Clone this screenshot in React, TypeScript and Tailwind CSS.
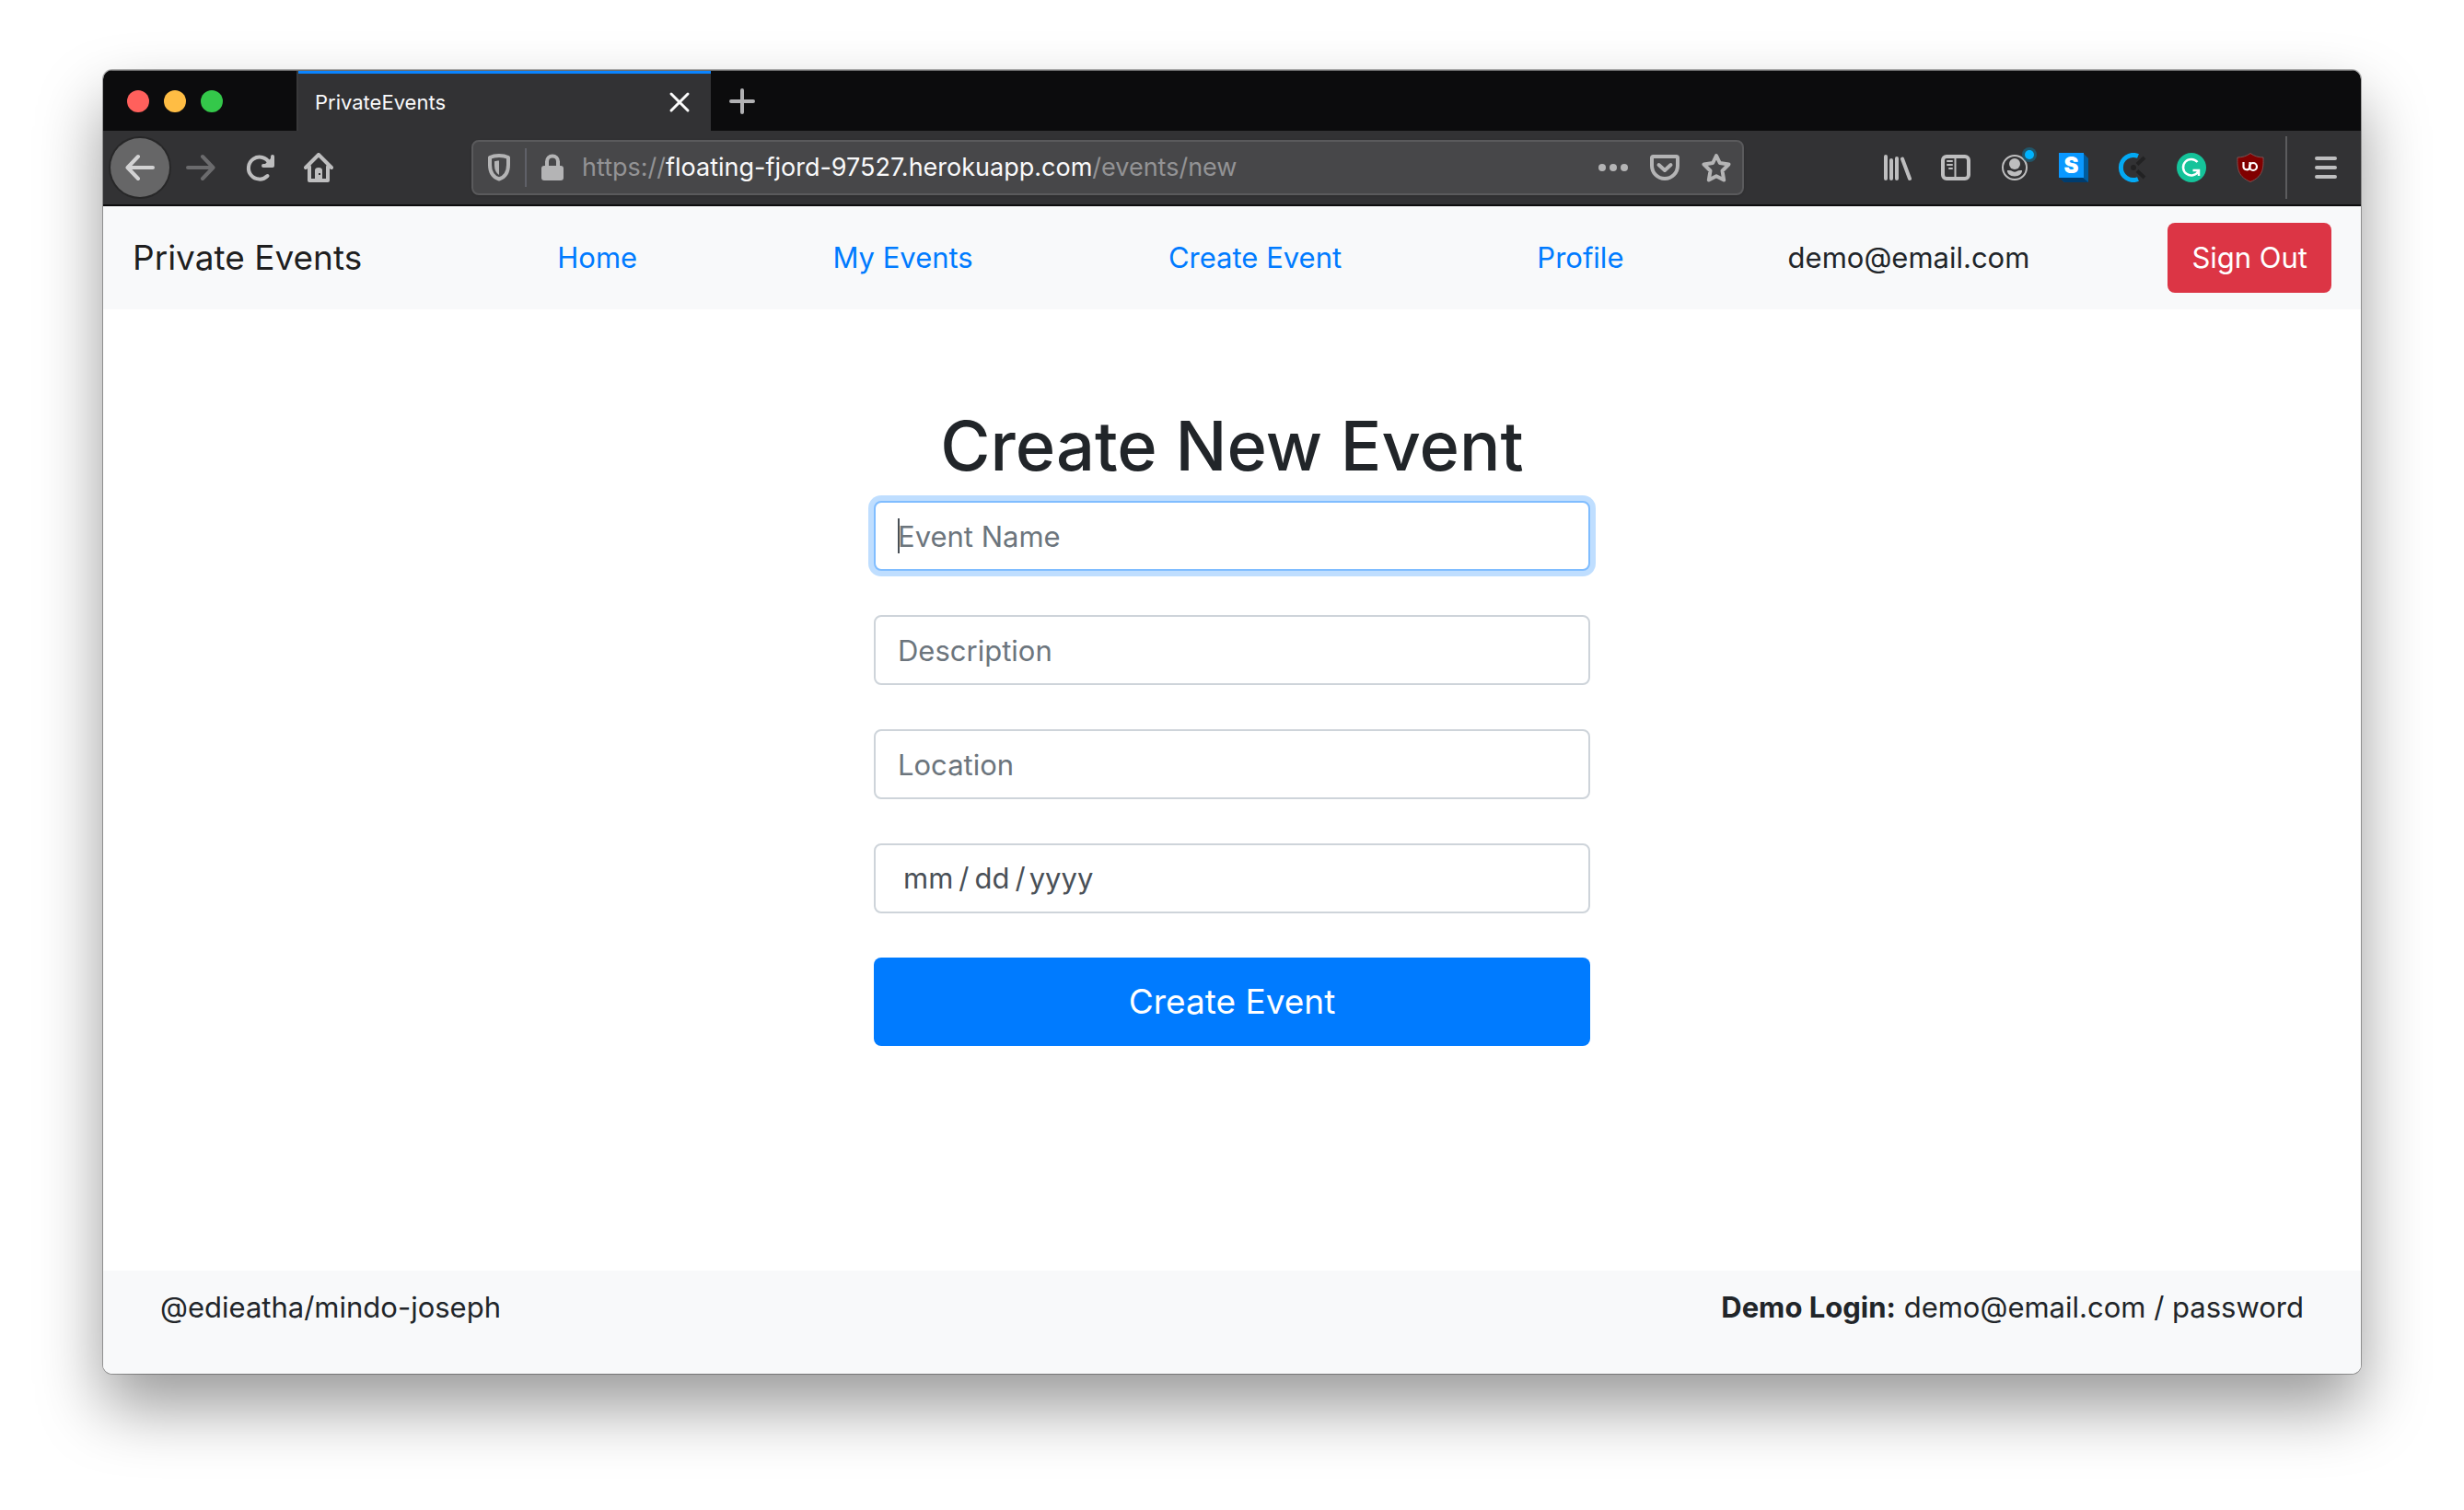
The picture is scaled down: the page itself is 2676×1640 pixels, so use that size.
import React from "react";

function Icon({ children, className = "size-8" }: { children: React.ReactNode; className?: string }) {
  return (
    <svg viewBox="0 0 32 32" className={className} fill="none" aria-hidden="true">
      {children}
    </svg>
  );
}

function ToolButton({ label, children }: { label: string; children: React.ReactNode }) {
  return (
    <button type="button" aria-label={label} className="flex size-16 shrink-0 items-center justify-center text-[#bebebf]">
      {children}
    </button>
  );
}

const line = { stroke: "currentColor", strokeWidth: 4, strokeLinecap: "round", strokeLinejoin: "round" } as const;

function TabStrip() {
  return (
    <div className="flex h-[66px] items-stretch border-t border-[#6e6e6e] bg-[#0c0c0d]">
      <div className="flex w-[212px] shrink-0 items-center gap-4 border-r-2 border-[#39393a] pl-[26px]">
        <button type="button" aria-label="Close window" className="size-6 rounded-full bg-[#ff605c]" />
        <button type="button" aria-label="Minimize window" className="size-6 rounded-full bg-[#ffbd44]" />
        <button type="button" aria-label="Zoom window" className="size-6 rounded-full bg-[#34c84a]" />
      </div>
      <div className="flex w-[448px] shrink-0 items-center justify-between border-t-3 border-[#0a84ff] bg-[#323234] pr-[18px] pl-[18px] text-[22px] text-[#f9f9fa]">
        <span>PrivateEvents</span>
        <button type="button" aria-label="Close tab">
          <Icon>
            <path d="M7 7 L25 25 M25 7 L7 25" stroke="#fbfbfb" strokeWidth="3" strokeLinecap="round" />
          </Icon>
        </button>
      </div>
      <button type="button" aria-label="New tab" className="ml-[18px] text-[#b1b1b3]">
        <Icon>
          <path d="M16 4 V28 M4 16 H28" {...line} />
        </Icon>
      </button>
    </div>
  );
}

function AddressBar() {
  return (
    <div className="mx-[134px] flex h-[60px] min-w-0 flex-1 items-center rounded-lg border-2 border-[#5a5a5c] bg-[#474749] pr-3 pl-3 text-[#b4b4b5] shadow-sm">
      <button type="button" aria-label="Tracking protection">
        <Icon>
          <path d="M16 4 C12 4 8.500 4.800 6 6 V14 C6 22 10 27.500 16 29.500 C22 27.500 26 22 26 14 V6 C23.500 4.800 20 4 16 4 Z" stroke="currentColor" strokeWidth="4" strokeLinejoin="round" transform="translate(0 -1)" />
          <path d="M16 8.500 C14 8.500 12.500 8.800 11 9.300 V14 C11 18.500 13 22 16 24 Z" fill="currentColor" />
        </Icon>
      </button>
      <span className="ml-3 h-[42px] w-0.5 bg-[#5f6068]" />
      <button type="button" aria-label="Site information" className="ml-3">
        <Icon>
          <path d="M10 15 V9.500 A6 6 0 0 1 22 9.500 V15" stroke="currentColor" strokeWidth="4" />
          <rect x="4" y="14" width="24" height="16" rx="3" fill="currentColor" />
        </Icon>
      </button>
      <span className="ml-4 flex-1 truncate text-[27px] text-[#939395]">
        https://<span className="text-[#f9f9fa]">floating-fjord-97527.herokuapp.com</span>/events/new
      </span>
      <span className="flex items-center gap-6">
        <button type="button" aria-label="Page actions">
          <Icon>
            <circle cx="4" cy="16" r="4" fill="currentColor" />
            <circle cx="16" cy="16" r="4" fill="currentColor" />
            <circle cx="28" cy="16" r="4" fill="currentColor" />
          </Icon>
        </button>
        <button type="button" aria-label="Save to Pocket">
          <Icon>
            <path d="M3.500 4 H28.500 Q30 4 30 5.500 V14 A14 14 0 0 1 2 14 V5.500 Q2 4 3.500 4 Z" stroke="currentColor" strokeWidth="4" />
            <path d="M9.500 13 L16 19 L22.500 13" {...line} />
          </Icon>
        </button>
        <button type="button" aria-label="Bookmark this page">
          <Icon>
            <path d="M16 3 L19.800 11 L29.500 12.500 L22.500 19.500 L24.200 29.500 L16 25.200 L7.800 29.500 L9.500 19.500 L2.500 12.500 L12.200 11 Z" stroke="currentColor" strokeWidth="4" strokeLinejoin="round" />
          </Icon>
        </button>
      </span>
    </div>
  );
}

function Toolbar() {
  return (
    <div className="flex h-[82px] items-center border-b-2 border-[#0c0c0d] bg-[#323234] pr-1.5 pl-2">
      <button
        type="button"
        aria-label="Back"
        className="mr-0.5 flex size-16 shrink-0 items-center justify-center rounded-full bg-[#666667] text-[#d2d2d3] ring-2 ring-[#272728]"
      >
        <Icon>
          <path d="M30 16 H3 M14 4 L2.500 16 L14 28" {...line} />
        </Icon>
      </button>
      <button type="button" aria-label="Forward" disabled className="flex size-16 shrink-0 items-center justify-center text-[#6b6b6d]">
        <Icon>
          <path d="M2 16 H29 M18 4 L29.500 16 L18 28" {...line} />
        </Icon>
      </button>
      <ToolButton label="Reload">
        <Icon>
          <path d="M24.500 25 A12 12 0 1 1 26.500 11" {...line} />
          <path d="M30 4 V14 H20" {...line} />
          <path d="M30 4 V14 H20 Z" fill="currentColor" />
        </Icon>
      </ToolButton>
      <ToolButton label="Home">
        <Icon>
          <path d="M2 16 L16 2 L30 16 M6 15 V30 H26 V15" {...line} />
          <path d="M12 29 V19 Q12 16 16 16 Q20 16 20 19 V29 Z" fill="currentColor" />
          <rect x="16" y="22" width="2" height="2" fill="#323234" />
        </Icon>
      </ToolButton>

      <AddressBar />

      <ToolButton label="Library">
        <Icon>
          <path d="M4 4 V28 M10 8 V28 M16 6 V28 M22 6.500 L30 28" {...line} />
        </Icon>
      </ToolButton>
      <ToolButton label="Sidebars">
        <Icon>
          <rect x="2" y="4" width="28" height="24" rx="4" stroke="currentColor" strokeWidth="4" />
          <path d="M15.500 4 V28 M7 9 H12 M7 13 H12 M9 17 H12" stroke="currentColor" strokeWidth="2" strokeLinecap="round" />
        </Icon>
      </ToolButton>
      <ToolButton label="Account">
        <Icon className="size-8 overflow-visible">
          <circle cx="16" cy="16" r="13" stroke="currentColor" strokeWidth="2" />
          <circle cx="16" cy="12" r="6" fill="currentColor" />
          <path d="M8 19 Q12 18.500 13.500 20 Q16 21.500 18.500 20 Q20 18.500 24 19 C24.500 22 21 25.500 16 25.500 C11 25.500 7.500 22 8 19 Z" fill="currentColor" />
          <circle cx="32" cy="2" r="8" fill="#1d5f78" opacity="0.8" />
          <circle cx="32" cy="2" r="5" fill="#00b3ff" />
        </Icon>
      </ToolButton>
      <ToolButton label="Stylus extension">
        <Icon>
          <path d="M0 0 H26 L32 6 V32 H6 L0 26 Z" fill="#005c9e" />
          <path d="M0 27 L6 32 H32 L26 27 Z" fill="#003c6e" />
          <rect width="27" height="27" fill="#0a98ff" />
          <text x="13.500" y="22" textAnchor="middle" fontSize="24" fontWeight="900" fill="#fff" fontFamily="Inter, sans-serif">S</text>
        </Icon>
      </ToolButton>
      <ToolButton label="Clockify extension">
        <Icon>
          <path d="M22 3.500 A13.500 13.500 0 1 0 22 28.500" stroke="#03a9f4" strokeWidth="5" />
          <circle cx="17" cy="16" r="3" fill="#222223" />
          <path d="M21 12.500 L29 5 M21 19.500 L29 27" stroke="#222223" strokeWidth="4" />
        </Icon>
      </ToolButton>
      <ToolButton label="Grammarly extension">
        <Icon>
          <circle cx="16" cy="16" r="16" fill="#15c39a" />
          <path d="M22.500 10 A8.800 8.800 0 1 0 23.500 20 M17.500 19 H24 V25" stroke="#fff" strokeWidth="2.500" />
        </Icon>
      </ToolButton>
      <ToolButton label="uBlock extension">
        <Icon>
          <path d="M16 0.500 C12 3.500 7 5 2 5 C1.500 18 3 26 16 31.500 C29 26 30.500 18 30 5 C25 5 20 3.500 16 0.500 Z" fill="#800000" stroke="#7d5050" strokeWidth="1" />
          <path d="M8.500 10 V15.500 A3.700 3.700 0 0 0 15.500 16 V10" stroke="#fff" strokeWidth="2.200" />
          <circle cx="19" cy="15" r="4" stroke="#fff" strokeWidth="2.200" />
        </Icon>
      </ToolButton>

      <span className="mr-2.5 ml-1.5 h-[68px] w-0.5 shrink-0 bg-[#5c5c5e]" />
      <ToolButton label="Menu">
        <Icon>
          <path d="M6 6 H26 M6 16 H26 M6 26 H26" {...line} />
        </Icon>
      </ToolButton>
    </div>
  );
}

const links = ["Home", "My Events", "Create Event", "Profile"];

function SiteNav() {
  return (
    <nav className="flex items-center bg-[#f8f9fa] px-8 py-[18px] text-[31px]">
      <a href="#" className="text-[37px] whitespace-nowrap text-black/90">
        Private Events
      </a>
      <ul className="ml-[106px] flex flex-1 justify-around">
        {links.map((label) => (
          <li key={label}>
            <a href="#" className="whitespace-nowrap text-[#007bff]">
              {label}
            </a>
          </li>
        ))}
      </ul>
      <span className="ml-[72px]">demo@email.com</span>
      <button type="button" className="ml-[150px] h-[76px] rounded-lg bg-[#dc3545] px-[26px] whitespace-nowrap text-white">
        Sign Out
      </button>
    </nav>
  );
}

const fieldBox = "block h-[76px] w-full rounded-lg border-2 bg-white px-6 text-[31px] text-[#495057] outline-none placeholder:text-[#6c757d] placeholder:opacity-100";

function EventForm() {
  return (
    <form className="flex w-[778px] max-w-full flex-col gap-12">
      <div className="relative">
        <input type="text" aria-label="Event Name" placeholder="Event Name" className={`${fieldBox} border-[#80bdff] ring-6 ring-[#007bff]/25`} />
        <span className="absolute top-[19px] left-[26px] h-[38px] w-0.5 bg-[#495057]" />
      </div>
      <input type="text" aria-label="Description" placeholder="Description" className={`${fieldBox} border-[#ced4da]`} />
      <input type="text" aria-label="Location" placeholder="Location" className={`${fieldBox} border-[#ced4da]`} />
      <input
        type="date"
        aria-label="Date"
        className={`${fieldBox} border-[#ced4da] [&::-webkit-calendar-picker-indicator]:hidden [&::-webkit-datetime-edit-day-field]:px-1.5 [&::-webkit-datetime-edit-month-field]:px-1.5 [&::-webkit-datetime-edit-year-field]:px-1`}
      />
      <button type="submit" className="h-24 rounded-lg bg-[#007bff] text-[37px] text-white">
        Create Event
      </button>
    </form>
  );
}

export default function App() {
  return (
    <div className="flex min-h-screen flex-col bg-white px-28 pt-[76px] pb-[148px] font-[Inter,'Liberation_Sans',sans-serif] text-[#212529]">
      <div className="flex flex-1 flex-col rounded-[10px] shadow-[0_0_0_1px_rgba(0,0,0,0.3),0_36px_70px_rgba(0,0,0,0.4)]">
        <div className="flex flex-1 flex-col overflow-hidden rounded-[10px] bg-white">
          <TabStrip />
          <Toolbar />
          <SiteNav />
          <main className="flex flex-1 flex-col items-center pt-[100px]">
            <h1 className="mb-3 text-[74px] leading-[96px] font-medium">Create New Event</h1>
            <EventForm />
          </main>
          <footer className="flex justify-between bg-[#f8f9fa] px-[62px] pt-4 pb-12 text-[31px] leading-[48px]">
            <span>@edieatha/mindo-joseph</span>
            <span>
              <strong className="font-bold">Demo Login:</strong> demo@email.com / password
            </span>
          </footer>
        </div>
      </div>
    </div>
  );
}
